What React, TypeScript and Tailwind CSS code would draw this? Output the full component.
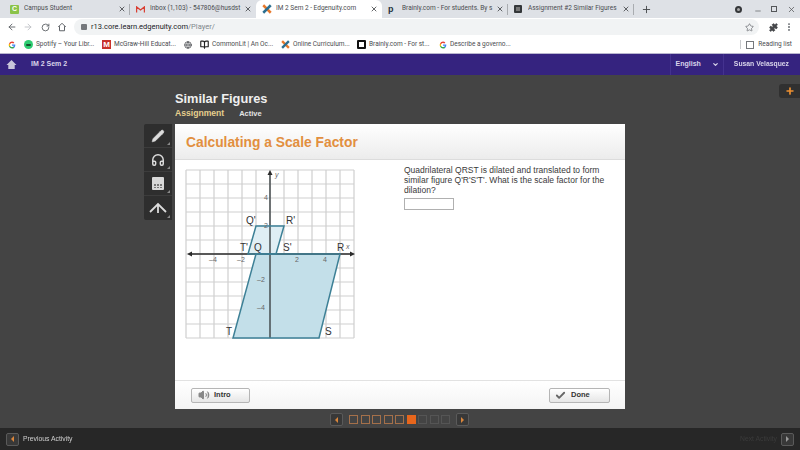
import { ArrowLeft, ArrowRight, BookOpen, Check, ChevronDown, Globe, Headphones, Minus, MoreVertical, Pencil, Plus, Puzzle, RotateCw, Star, Volume2, X } from "lucide-react";
import type { ReactNode } from "react";

const ui = "font-['Roboto',sans-serif]";
const site = "font-['Liberation_Sans',Arial,sans-serif]";

function GoogleG({ size = 10 }: { size?: number }) {
  return (
    <svg width={size} height={size} viewBox="0 0 24 24" className="shrink-0">
      <path d="M22 12.2c0-.7-.1-1.400-.2-2H12v4h5.600c-.3 1.300-1 2.400-2.100 3.100v2.600h3.400c2-1.800 3.100-4.500 3.100-7.700z" fill="#4285f4" />
      <path d="M12 22.500c2.800 0 5.200-.9 6.900-2.600l-3.400-2.600c-.9.600-2.100 1-3.500 1-2.700 0-5-1.800-5.800-4.300H3.200v2.700c1.700 3.500 5.100 5.800 8.800 5.800z" fill="#34a853" />
      <path d="M6.200 14c-.2-.6-.3-1.300-.3-2s.1-1.400.3-2V7.300H3.200C2.500 8.700 2.100 10.300 2.100 12s.4 3.300 1.100 4.700z" fill="#fbbc05" />
      <path d="M12 5.700c1.500 0 2.900.5 4 1.500l3-3C17.200 2.500 14.800 1.500 12 1.500 8.300 1.500 4.900 3.800 3.200 7.300l3 2.700c.8-2.500 3.100-4.300 5.800-4.300z" fill="#ea4335" />
    </svg>
  );
}

function EdgeX({ size = 10 }: { size?: number }) {
  return (
    <svg width={size} height={size} viewBox="0 0 24 24" className="shrink-0">
      <path d="M3 3l18 18" stroke="#e8792b" strokeWidth="6" />
      <path d="M21 3L3 21" stroke="#2c6f91" strokeWidth="6" />
    </svg>
  );
}

function Tab({ icon, title, active, sep }: { icon: ReactNode; title: string; active?: boolean; sep?: boolean }) {
  return (
    <div className={`flex h-[18px] w-[126px] shrink-0 items-center pl-[6px] ${active ? "rounded-t-md bg-white" : ""}`}>
      <span className="flex w-[14px] shrink-0 items-center">{icon}</span>
      <span className={`${ui} min-w-0 flex-1 overflow-hidden whitespace-nowrap text-[6.500px] text-[#4a4c50]`}>{title}</span>
      <X size={8} strokeWidth={2.500} className="ml-[3px] shrink-0 text-[#45474a]" />
      <span className={`ml-[3px] h-[11px] w-px shrink-0 ${sep ? "bg-[#a9acb0]" : "bg-transparent"}`} />
    </div>
  );
}

function TabStrip() {
  return (
    <div className="flex h-[18px] items-center bg-[#dee1e6] pl-[4px]">
      <Tab
        sep
        title="Campus Student"
        icon={<span className={`${site} flex h-[9px] w-[9px] items-center justify-center rounded-[1px] bg-[#8bc34a] text-[7px] font-bold text-white`}>C</span>}
      />
      <Tab
        title="Inbox (1,103) - 547806@husdst"
        icon={
          <svg width="9" height="7" viewBox="0 0 20 16">
            <path d="M1 15V2l9 7 9-7v13" fill="none" stroke="#d93f33" strokeWidth="3" />
          </svg>
        }
      />
      <Tab active title="IM 2 Sem 2 - Edgenuity.com" icon={<EdgeX />} />
      <Tab
        sep
        title="Brainly.com - For students. By s"
        icon={<span className={`${site} text-[9px] font-bold leading-none text-[#28333f]`}>p</span>}
      />
      <Tab
        sep
        title="Assignment #2 Similar Figures"
        icon={<span className="block h-[8px] w-[8px] rounded-[1px] border-[2px] border-[#34373a] bg-[#777]" />}
      />
      <Plus size={11} strokeWidth={2} className="ml-[7px] text-[#45474a]" />
      <span className="ml-auto h-[7px] w-[7px] rounded-full border-[2px] border-[#35373a] bg-[#aaa]" />
      <Minus size={8} strokeWidth={2} className="ml-[12px] mt-[3px] text-[#55575a]" />
      <span className="ml-[9px] h-[6px] w-[6px] border border-[#55575a]" />
      <X size={9} strokeWidth={2} className="ml-[10px] mr-[4px] text-[#55575a]" />
    </div>
  );
}

function Toolbar() {
  return (
    <div className="flex h-[18px] items-center bg-white pl-[7px] text-[#5f6368]">
      <ArrowLeft size={10} strokeWidth={2.200} />
      <ArrowRight size={10} strokeWidth={2} className="ml-[6px] text-[#b9bcc0]" />
      <RotateCw size={9} strokeWidth={2.400} className="ml-[8px]" />
      <svg width="10" height="10" viewBox="0 0 24 24" className="ml-[7px]" fill="none" stroke="currentColor" strokeWidth="2.400">
        <path d="M3 12l9-9 9 9M6 10v11h12V10" />
      </svg>
      <div className="ml-[7px] flex h-[16px] flex-1 items-center justify-between rounded-full bg-[#f1f3f4] pl-[6px] pr-[5px]">
        <div className="flex items-center">
          <span className="ml-[1px] h-[6px] w-[6px] rounded-[1px] bg-[#75787c]" />
          <span className={`${ui} ml-[4px] text-[7.500px] text-[#202124]`}>
            r13.core.learn.edgenuity.com<span className="text-[#80868b]">/Player/</span>
          </span>
        </div>
        <Star size={9} strokeWidth={1.800} />
      </div>
      <Puzzle size={9} fill="currentColor" className="ml-[10px] text-[#45474a]" />
      <MoreVertical size={10} strokeWidth={2.500} className="ml-[6px] mr-[6px]" />
    </div>
  );
}

function Bookmark({ icon, label, className }: { icon: ReactNode; label?: string; className: string }) {
  return (
    <div className={`flex shrink-0 items-center gap-[3px] ${className}`}>
      {icon}
      {label && <span className={`${ui} whitespace-nowrap text-[6.500px] text-[#4a4c50]`}>{label}</span>}
    </div>
  );
}

function BookmarksBar() {
  return (
    <div className="flex h-[18px] items-center border-b border-[#b9b6cf] bg-white pl-[8px]">
      <Bookmark className="w-[16px]" icon={<GoogleG size={8} />} />
      <Bookmark
        className="w-[78px]"
        icon={
          <span className="flex h-[9px] w-[9px] items-center justify-center rounded-full bg-[#2ecc71]">
            <span className="h-[2px] w-[5px] rounded-full bg-[#16532f]" />
          </span>
        }
        label="Spotify – Your Libr..."
      />
      <Bookmark
        className="w-[82px]"
        icon={<span className={`${site} flex h-[9px] w-[9px] items-center justify-center bg-[#c8322c] text-[8px] font-bold text-white`}>M</span>}
        label="McGraw-Hill Educat..."
      />
      <Bookmark className="w-[16px]" icon={<Globe size={8} strokeWidth={2.500} className="text-[#55585c]" />} />
      <Bookmark className="w-[81px]" icon={<BookOpen size={9} strokeWidth={3} className="text-[#222]" />} label="CommonLit | An Oc..." />
      <Bookmark className="w-[76px]" icon={<EdgeX size={9} />} label="Online Curriculum..." />
      <Bookmark
        className="w-[82px]"
        icon={<span className="h-[9px] w-[9px] rounded-[1px] border-[2px] border-[#111] bg-white" />}
        label="Brainly.com - For st..."
      />
      <Bookmark className="w-[80px]" icon={<GoogleG size={8} />} label="Describe a governo..." />
      <div className="ml-auto flex items-center">
        <span className="h-[9px] w-px bg-[#c9cbce]" />
        <span className="ml-[5px] h-[8px] w-[8px] border border-[#75787c]" />
        <span className={`${ui} ml-[4px] mr-[8px] text-[6.500px] text-[#4a4c50]`}>Reading list</span>
      </div>
    </div>
  );
}

function PurpleBar() {
  return (
    <div className={`${site} flex h-[21px] items-center bg-[#35237f] text-[6.800px] font-bold text-[#d9d5ea]`}>
      <svg width="11" height="11" viewBox="0 0 24 24" className="ml-[6px]" fill="#c9c6da">
        <path d="M12 2L1 13h4v9h14v-9h4z" />
      </svg>
      <span className="ml-[14px] text-[7px]">IM 2 Sem 2</span>
      <div className="ml-auto flex h-full items-center border-l border-[#44328f] pl-[5px]">
        <span className="text-[7px]">English</span>
        <ChevronDown size={7} strokeWidth={4} className="ml-[11px]" />
      </div>
      <div className="ml-[4px] flex h-full items-center border-l border-[#44328f] pl-[10px] pr-[11px]">Susan Velasquez</div>
    </div>
  );
}

const gridLines = Array.from({ length: 13 }, (_, i) => i * 14);

// graph units map to 14px cells, origin in the centre of the grid
function Graph() {
  return (
    <svg width="172" height="172" viewBox="-2 -2 172 172" className={`shrink-0 ${site}`}>
      {gridLines.map((p) => (
        <g key={p} stroke="#cfcfcf" strokeWidth="1.200">
          <line x1={p} y1="0" x2={p} y2="168" />
          <line x1="0" y1={p} x2="168" y2={p} />
        </g>
      ))}
      <polygon points="70,84 154,84 133,168 47,168" fill="#c3dfe9" />
      <polygon points="70,56 98,56 90,84 62,84" fill="#dfeef4" />
      <line x1="84" y1="2" x2="84" y2="168" stroke="#3d4345" strokeWidth="1.400" />
      <path d="M84 0l-2.500 5h5z" fill="#2a2a2a" />
      <line x1="3" y1="84" x2="167" y2="84" stroke="#2a2a2a" strokeWidth="1.400" />
      <path d="M1 84l5-2.500v5zM169 84l-5-2.500v5z" fill="#2a2a2a" />
      <polygon points="70,84 154,84 133,168 47,168" fill="none" stroke="#3d8096" strokeWidth="1.500" />
      <polygon points="70,56 98,56 90,84 62,84" fill="none" stroke="#3d8096" strokeWidth="1.500" />
      <g fontSize="7" fill="#666">
        <text x="89" y="7" fontStyle="italic">y</text>
        <text x="160" y="79" fontStyle="italic">x</text>
        <text x="78" y="30">4</text>
        <text x="78" y="58">2</text>
        <text x="23" y="92">–4</text>
        <text x="51" y="92">–2</text>
        <text x="109" y="92">2</text>
        <text x="137" y="92">4</text>
        <text x="71" y="112">–2</text>
        <text x="71" y="140">–4</text>
      </g>
      <g fontSize="10" fill="#333">
        <text x="60" y="54">Q'</text>
        <text x="100" y="54">R'</text>
        <text x="54" y="81">T'</text>
        <text x="68" y="81">Q</text>
        <text x="97" y="81">S'</text>
        <text x="151" y="81">R</text>
        <text x="40" y="165">T</text>
        <text x="139" y="165">S</text>
      </g>
    </svg>
  );
}

function ToolButton({ children, last }: { children: ReactNode; last?: boolean }) {
  return (
    <div className={`relative flex h-[24px] items-center justify-center text-[#dcdcdc] ${last ? "" : "border-b border-[#3c3c3c]"}`}>
      {children}
      <span className="absolute bottom-[2px] right-[2px] h-0 w-0 border-b-[3px] border-l-[3px] border-b-[#8a8a8a] border-l-transparent" />
    </div>
  );
}

function ToolRail() {
  return (
    <div className="mt-[49px] flex w-[28px] shrink-0 flex-col self-start rounded-l-[2px] bg-[#2e2e2e]">
      <ToolButton>
        <Pencil size={14} fill="currentColor" strokeWidth={1} />
      </ToolButton>
      <ToolButton>
        <Headphones size={14} strokeWidth={2.500} />
      </ToolButton>
      <ToolButton>
        <span className="grid h-[13px] w-[12px] grid-cols-3 content-end gap-[1px] rounded-[1px] bg-[#d8d8d8] p-[2px]">
          {Array.from({ length: 6 }, (_, i) => (
            <span key={i} className="h-[1.500px] bg-[#777]" />
          ))}
        </span>
      </ToolButton>
      <ToolButton last>
        <svg width="18" height="12" viewBox="0 0 18 12" fill="none" stroke="currentColor" strokeWidth="1.800">
          <path d="M1 10L9 2l8 8M9 2v9" />
        </svg>
      </ToolButton>
    </div>
  );
}

function ActionButton({ icon, label, className }: { icon: ReactNode; label: string; className: string }) {
  return (
    <div className={`flex h-[15px] items-center rounded-[2px] border border-[#b5b5b5] bg-gradient-to-b from-[#ffffff] to-[#e6e6e6] ${className}`}>
      {icon}
      <span className={`${site} text-[7.500px] font-bold text-[#333]`}>{label}</span>
    </div>
  );
}

function Card() {
  return (
    <div className="flex h-[285px] w-[450px] shrink-0 flex-col bg-white">
      <div className="flex h-[36px] items-center border-b border-[#dcdcdc] bg-gradient-to-b from-white to-[#ececec] pl-[11px] pt-[4px]">
        <h1 className={`${site} text-[13.800px] font-bold text-[#e28f3f]`}>Calculating a Scale Factor</h1>
      </div>
      <div className="flex flex-1 pl-[9px] pt-[8px]">
        <Graph />
        <div className="ml-[48px] w-[205px] -mt-[3px]">
          <p className={`${site} text-[8.500px] leading-[10px] text-[#3a3a3a]`}>
            Quadrilateral QRST is dilated and translated to form similar figure Q'R'S'T'. What is the scale factor for the dilation?
          </p>
          <div className="mt-[3px] h-[12px] w-[50px] border border-[#b0b0b0] bg-white" />
        </div>
      </div>
      <div className="flex h-[29px] items-center justify-between border-t border-[#e2e2e2] bg-gradient-to-b from-white to-[#f4f4f4] pl-[16px] pr-[15px]">
        <ActionButton
          className="w-[59px] pl-[6px]"
          icon={<Volume2 size={12} fill="#888" strokeWidth={2} className="mr-[4px] text-[#888]" />}
          label="Intro"
        />
        <ActionButton
          className="w-[61px] pl-[5px]"
          icon={<Check size={11} strokeWidth={4} className="mr-[5px] text-[#666]" />}
          label="Done"
        />
      </div>
    </div>
  );
}

function ArrowButton({ dir, dim }: { dir: "left" | "right"; dim?: boolean }) {
  return (
    <div className="flex h-[13px] w-[13px] shrink-0 items-center justify-center rounded-[2px] border border-[#5a5a5a] bg-[#383838]">
      <span
        className={`h-0 w-0 border-y-[3px] border-y-transparent ${dir === "left" ? "border-r-[3px]" : "border-l-[3px]"} ${
          dim ? "border-l-[#999]" : dir === "left" ? "border-r-[#d9853b]" : "border-l-[#d9853b]"
        }`}
      />
    </div>
  );
}

const pages = [0, 1, 2, 3, 4, 5, 6, 7, 8];

function Pager() {
  return (
    <div className="mt-[4px] flex items-center pl-[155px]">
      <ArrowButton dir="left" />
      <div className="ml-[6px] flex gap-[2.500px]">
        {pages.map((page) => (
          <span
            key={page}
            className={`h-[9px] w-[9px] border ${
              page === 5 ? "border-[#e8661c] bg-[#e8661c]" : page < 5 ? "border-[#a5704a]" : "border-[#555]"
            }`}
          />
        ))}
      </div>
      <div className="ml-[6px]">
        <ArrowButton dir="right" />
      </div>
    </div>
  );
}

export default function App() {
  return (
    <div className="flex h-[450px] w-[800px] flex-col overflow-hidden blur-[0.4px]">
      <TabStrip />
      <Toolbar />
      <BookmarksBar />
      <PurpleBar />
      <main className="relative flex-1 bg-[#444444]">
        <div className="flex pl-[144px]">
          <ToolRail />
          <div className="pl-[3px]">
            <div className="h-[49px] pt-[16px]">
              <h2 className={`${site} text-[12.800px] font-bold leading-[16px] text-[#efefef]`}>Similar Figures</h2>
              <div className={`${site} flex items-baseline font-bold`}>
                <span className="text-[8.600px] text-[#e6cf8e]">Assignment</span>
                <span className="ml-[15px] text-[7.500px] text-[#e5e5e5]">Active</span>
              </div>
            </div>
            <Card />
            <Pager />
          </div>
        </div>
        <div className="absolute right-0 top-[9px] flex h-[14px] w-[21px] items-center justify-center rounded-l-[3px] bg-[#303030]">
          <Plus size={10} strokeWidth={4} className="text-[#ee9030]" />
        </div>
      </main>
      <footer className={`${site} flex h-[22px] items-center bg-[#272727] px-[6px] text-[6.800px]`}>
        <ArrowButton dir="left" />
        <span className="ml-[4px] text-[#cfcfcf]">Previous Activity</span>
        <span className="ml-auto text-[#3b3b3b]">Next Activity</span>
        <div className="ml-[4px]">
          <ArrowButton dir="right" dim />
        </div>
      </footer>
    </div>
  );
}
